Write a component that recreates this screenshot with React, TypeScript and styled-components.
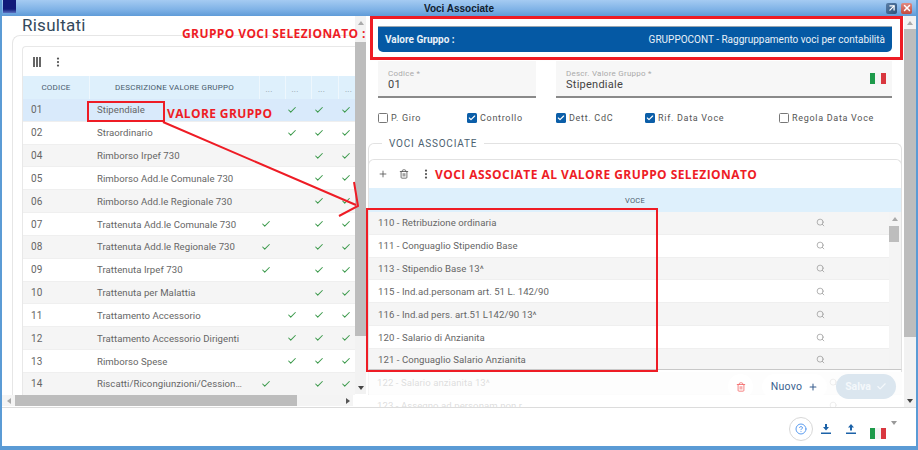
import React from "react";
import styled, { createGlobalStyle } from "styled-components";
import { Check, EllipsisVertical, Plus, Trash2, Search, CircleHelp, X, ArrowUpRight } from "lucide-react";

const Global = createGlobalStyle`
  html, body { margin: 0; padding: 0; background: #fff; }
  #root { width: 918px; height: 450px; }
  * { box-sizing: border-box; }
`;

const Win = styled.div`
  position: relative;
  width: 918px;
  height: 450px;
  overflow: hidden;
  display: flex;
  flex-direction: column;
  background: #fff;
  border-left: 2px solid #5b9bd5;
  border-right: 2px solid #5b9bd5;
  border-bottom: 4px solid #5b9bd5;
  font-family: Roboto, "Liberation Sans", sans-serif;
  color: #666;
`;

const TitleBar = styled.div`
  flex: 0 0 16px;
  margin: 0 -2px;
  padding: 0 3px;
  display: grid;
  grid-template-columns: 1fr auto 1fr;
  align-items: center;
  background: linear-gradient(#a5cbf2, #7fb2e6 60%, #5f9bd8);
`;
const AppIcon = styled.div`
  width: 13px;
  height: 13px;
  margin-top: -3px;
  background: linear-gradient(#101a7a 70%, #5a70c0);
`;
const WinTitle = styled.div`
  font: bold 10px "Liberation Sans", sans-serif;
  color: #10202f;
`;
const WinBtns = styled.div`
  display: flex;
  justify-content: flex-end;
  gap: 4px;
  margin-right: 3px;
`;
const WinBtn = styled.div<{ $bg: string }>`
  width: 11px;
  height: 11px;
  border-radius: 2px;
  display: flex;
  align-items: center;
  justify-content: center;
  background: ${(p) => p.$bg};
  color: #fff;
`;

const Body = styled.div`
  flex: 0 0 391px;
  display: flex;
  overflow: hidden;
`;

const LeftPanel = styled.div`
  flex: 0 0 365px;
  display: flex;
`;
const LeftMain = styled.div`
  flex: 0 0 353px;
  display: flex;
  flex-direction: column;
  overflow: hidden;
`;
const Heading = styled.div`
  flex: 0 0 19px;
  padding-left: 20px;
  font-size: 17px;
  line-height: 19px;
  letter-spacing: 0.25px;
  color: #33495c;
`;
const OuterCard = styled.div`
  flex: 1;
  min-height: 0;
  margin-left: 10px;
  padding: 10px 0 0 9px;
  border: 1px solid #e6e6e6;
  border-right: none;
  border-bottom: none;
  border-radius: 8px 0 0 0;
`;
const InnerCard = styled.div`
  height: 100%;
  overflow: hidden;
  border-top: 1px solid #e8e8e8;
  border-left: 1px solid #e8e8e8;
  border-radius: 4px 0 0 0;
`;
const GridTool = styled.div`
  height: 29px;
  display: flex;
  align-items: center;
  gap: 11px;
  padding-left: 10px;
  color: #555;
`;
const ColsIcon = styled.svg`
  width: 8px;
  height: 10px;
  display: block;
`;
const Cols = "67px 170px 26px 26px 27px 27px";
const HeadRow = styled.div`
  display: grid;
  grid-template-columns: ${Cols};
  width: 343px;
  height: 23px;
  background: #def0fc;
`;
const HeadCell = styled.div`
  display: flex;
  align-items: center;
  justify-content: center;
  font-size: 8px;
  letter-spacing: 0.2px;
  color: #4a5c6c;
  border-right: 1px solid #eef7fd;
  white-space: nowrap;
  overflow: hidden;
`;
const DotsCell = styled(HeadCell)`
  align-items: flex-end;
  padding: 0 7px 5px 0;
  color: #8a98a4;
`;
const Row = styled.div<{ $kind: string }>`
  display: grid;
  grid-template-columns: ${Cols};
  width: 343px;
  height: 22.83px;
  align-items: center;
  font-size: 9.6px;
  letter-spacing: 0.05px;
  color: #666;
  border-bottom: 1px solid #efefef;
  background: ${(p) => (p.$kind === "sel" ? "#d9eafb" : p.$kind === "odd" ? "#f5f5f5" : "#fff")};
`;
const CodeCell = styled.div`
  padding-left: 8px;
  font-size: 10px;
`;
const DescCell = styled.div`
  padding: 0 16px 0 7px;
  white-space: nowrap;
  overflow: hidden;
  text-overflow: ellipsis;
`;
const CheckCell = styled.div`
  display: flex;
  justify-content: center;
  color: #3c9a4c;
  padding-right: 14px;
`;
const HScroll = styled.div`
  flex: 0 0 11px;
  display: flex;
  align-items: center;
  background: #f4f4f4;
  position: relative;
  margin: 0 2px 1px 0;
`;
const HThumb = styled.div`
  margin-left: 13px;
  width: 282px;
  height: 11px;
  background: #bdbdbd;
`;
const ArrowL = styled.div`
  position: absolute;
  left: 5px;
  width: 0;
  height: 0;
  border: 3px solid transparent;
  border-right: 4px solid #aaa;
  border-left: none;
`;
const ArrowR = styled.div`
  position: absolute;
  right: 3px;
  width: 0;
  height: 0;
  border: 3px solid transparent;
  border-left: 4px solid #555;
  border-right: none;
`;
const VScroll = styled.div<{ $w: number; $bottom?: number }>`
  flex: 0 0 ${(p) => p.$w}px;
  margin-bottom: ${(p) => p.$bottom ?? 0}px;
  display: flex;
  flex-direction: column;
  align-items: stretch;
  background: #f2f2f2;
`;
const ArrowUp = styled.div<{ $h: number }>`
  flex: 0 0 ${(p) => p.$h}px;
  padding-top: 5px;
  display: flex;
  justify-content: center;
  align-items: flex-start;
  &::before {
    content: "";
    border: 3px solid transparent;
    border-bottom: 4px solid #aaa;
    border-top: none;
  }
`;
const ArrowDown = styled.div`
  flex: 0 0 12px;
  display: flex;
  justify-content: center;
  align-items: center;
  &::before {
    content: "";
    border: 3px solid transparent;
    border-top: 4px solid #444;
    border-bottom: none;
  }
`;
const VThumb = styled.div<{ $h: number }>`
  flex: 0 0 ${(p) => p.$h}px;
  background: #bdbdbd;
`;
const VGap = styled.div`
  flex: 1;
`;

const RightPanel = styled.div`
  flex: 1;
  display: flex;
  position: relative;
  overflow: hidden;
`;
const RightMain = styled.div`
  flex: 0 0 537px;
  padding: 10px 12px 0 11px;
  background: #fff;
  overflow: hidden;
`;
const ValueBar = styled.div`
  height: 26px;
  padding: 0 7px;
  display: flex;
  justify-content: space-between;
  align-items: center;
  background: #0559a4;
  border-top: 1px solid #9aa6b0;
  border-radius: 0 0 5px 5px;
  color: #e9f1f8;
  font-size: 10px;
`;
const ValueLabel = styled.span`
  font-weight: 700;
`;
const Fields = styled.div`
  display: grid;
  grid-template-columns: 158px 336px;
  gap: 20px;
  margin-top: 9px;
`;
const Field = styled.div`
  position: relative;
  height: 37px;
  padding: 8px 10px 0;
  background: #f7f7f7;
  border-bottom: 2px solid #8a8a8a;
`;
const FieldLabel = styled.div`
  font-size: 8px;
  line-height: 9px;
  color: #aaa;
  letter-spacing: 0.25px;
`;
const FieldValue = styled.div`
  font-size: 11px;
  line-height: 14px;
  letter-spacing: 0.25px;
  color: #444;
`;
const Flag = styled.div<{ $right?: boolean }>`
  display: flex;
  width: 16px;
  height: 11px;
  ${(p) => (p.$right ? "position: absolute; right: 6px; top: 12px;" : "")}
`;
const FlagPart = styled.div<{ $c: string }>`
  flex: 1;
  background: ${(p) => p.$c};
`;
const Checks = styled.div`
  display: grid;
  grid-template-columns: 89px 89px 89px 134px auto;
  margin-top: 13px;
  height: 13px;
`;
const CheckItem = styled.div`
  display: flex;
  align-items: center;
  gap: 3px;
  font-size: 9px;
  letter-spacing: 0.7px;
  color: #555;
`;
const Box = styled.div<{ $on: boolean }>`
  width: 10px;
  height: 10px;
  border-radius: 1.5px;
  display: flex;
  align-items: center;
  justify-content: center;
  color: #fff;
  background: ${(p) => (p.$on ? "#0b5ea8" : "#fff")};
  border: ${(p) => (p.$on ? "none" : "1.5px solid #777")};
`;
const Fieldset = styled.div`
  position: relative;
  margin: 19px 0 0 -10px;
  width: 534px;
  height: 264px;
  padding-top: 15px;
  border: 1px solid #e2e2e2;
  border-bottom: none;
  border-radius: 6px 6px 0 0;
`;
const Legend = styled.div`
  position: absolute;
  top: -6px;
  left: 13px;
  padding: 0 7px;
  background: #fff;
  font-size: 10px;
  line-height: 12px;
  letter-spacing: 0.8px;
  color: #4c5f70;
`;
const SubCard = styled.div`
  margin: 0 -1px;
  border: 1px solid #e2e2e2;
  border-bottom-color: #c8c8c8;
  border-radius: 6px 6px 0 0;
  overflow: hidden;
`;
const SubTool = styled.div`
  height: 28px;
  display: flex;
  align-items: center;
  gap: 11px;
  padding-left: 9px;
  color: #555;
`;
const SubHead = styled.div`
  height: 24px;
  display: flex;
  align-items: center;
  justify-content: center;
  background: #def0fc;
  font-size: 7.5px;
  letter-spacing: 0.3px;
  color: #4a5c6c;
`;
const SubBody = styled.div`
  display: flex;
`;
const SubRows = styled.div`
  flex: 1;
  min-width: 0;
  height: 157px;
  overflow: hidden;
`;
const SubRow = styled.div<{ $odd: boolean }>`
  flex: 0 0 22.83px;
  height: 22.83px;
  padding: 0 64px 0 9px;
  display: flex;
  align-items: center;
  justify-content: space-between;
  font-size: 9.6px;
  letter-spacing: 0.05px;
  color: #666;
  border-bottom: 1px solid #efefef;
  background: ${(p) => (p.$odd ? "#f5f5f5" : "#fff")};
`;
const SubScroll = styled.div`
  flex: 0 0 12px;
  height: 157px;
  display: flex;
  flex-direction: column;
  background: #f4f4f4;
`;
const SubThumb = styled.div`
  flex: 0 0 16px;
  margin-right: 2px;
  background: #bdbdbd;
`;
const TailRows = styled.div`
  margin: 2px -1px 0;
`;
const Fade = styled.div`
  position: absolute;
  left: 2px;
  right: 12px;
  top: 356px;
  height: 35px;
  padding: 0 8px 6px 0;
  background: rgba(255, 255, 255, 0.78);
  display: flex;
  align-items: center;
  justify-content: flex-end;
  gap: 9px;
`;
const RoundBtn = styled.div`
  width: 25px;
  height: 25px;
  border-radius: 50%;
  background: #fff;
  display: flex;
  align-items: center;
  justify-content: center;
  color: #f36a6a;
`;
const NewBtn = styled.div`
  width: 65px;
  height: 25px;
  border-radius: 13px;
  background: #fff;
  display: flex;
  align-items: center;
  justify-content: center;
  gap: 6px;
  font-size: 10.5px;
  letter-spacing: 0.3px;
  color: #3a5f8f;
`;
const SaveBtn = styled.div`
  width: 60px;
  height: 25px;
  border-radius: 13px;
  background: #dbe6ef;
  display: flex;
  align-items: center;
  justify-content: center;
  gap: 5px;
  font-size: 10.5px;
  font-weight: 700;
  color: #f4f8fb;
`;

const Footer = styled.div`
  flex: 1;
  border-top: 1px solid #dcdcdc;
  display: flex;
  align-items: center;
  justify-content: flex-end;
  padding: 3px 19px 0 0;
`;
const HelpBtn = styled.div`
  width: 24px;
  height: 24px;
  border: 1px solid #d8d8d8;
  border-radius: 50%;
  display: flex;
  align-items: center;
  justify-content: center;
  color: #5a9cf0;
`;
const FootBtn = styled.div`
  width: 25px;
  height: 24px;
  display: flex;
  align-items: center;
  justify-content: center;
  color: #1c62a8;
`;
const FootIcon = styled.svg`
  width: 12px;
  height: 12px;
  fill: currentColor;
`;
const FootFlag = styled.div`
  display: flex;
  margin: 10px 0 0 7px;
`;
const Caret = styled.div`
  align-self: flex-start;
  margin: 10px 0 0 5px;
  border: 3px solid transparent;
  border-top: 4px solid #999;
  border-bottom: none;
`;

const Note = styled.div`
  position: absolute;
  font: bold 12px/13px "Open Sans", "Liberation Sans", sans-serif;
  color: #ee1c25;
  white-space: nowrap;
`;
const NoteGroup = styled(Note)`
  left: 180px;
  top: 27px;
  letter-spacing: 0.4px;
`;
const NoteValue = styled(Note)`
  left: 165px;
  top: 107px;
  letter-spacing: 0.38px;
`;
const NoteVoci = styled(Note)`
  left: 433px;
  top: 168px;
  letter-spacing: 0.44px;
`;
const Frame = styled.div`
  position: absolute;
  border: 2px solid #ee1c25;
`;
const FrameGroup = styled(Frame)`
  left: 368px;
  top: 16px;
  width: 533px;
  height: 44px;
  border-width: 3px;
`;
const FrameValue = styled(Frame)`
  left: 85px;
  top: 101px;
  width: 78px;
  height: 21px;
`;
const FrameVoci = styled(Frame)`
  left: 364px;
  top: 208px;
  width: 292px;
  height: 164px;
`;
const ArrowSvg = styled.svg`
  position: absolute;
  left: -2px;
  top: 0;
  width: 918px;
  height: 450px;
  pointer-events: none;
`;

const rows: [string, string, string, number[]][] = [
  ["01", "Stipendiale", "sel", [0, 1, 1, 1]],
  ["02", "Straordinario", "even", [0, 1, 1, 1]],
  ["04", "Rimborso Irpef 730", "odd", [0, 0, 1, 1]],
  ["05", "Rimborso Add.le Comunale 730", "even", [0, 0, 1, 1]],
  ["06", "Rimborso Add.le Regionale 730", "odd", [0, 0, 1, 1]],
  ["07", "Trattenuta Add.le Comunale 730", "even", [1, 0, 1, 1]],
  ["08", "Trattenuta Add.le Regionale 730", "odd", [1, 0, 1, 1]],
  ["09", "Trattenuta Irpef 730", "even", [1, 0, 1, 1]],
  ["10", "Trattenuta per Malattia", "odd", [0, 0, 1, 1]],
  ["11", "Trattamento Accessorio", "even", [0, 1, 1, 1]],
  ["12", "Trattamento Accessorio Dirigenti", "odd", [0, 1, 1, 1]],
  ["13", "Rimborso Spese", "even", [0, 1, 1, 1]],
  ["14", "Riscatti/Ricongiunzioni/Cessioni del quinto", "odd", [1, 0, 1, 1]],
];

const voci = [
  "110 - Retribuzione ordinaria",
  "111 - Conguaglio Stipendio Base",
  "113 - Stipendio Base 13^",
  "115 - Ind.ad.personam art. 51 L. 142/90",
  "116 - Ind.ad pers. art.51 L142/90 13^",
  "120 - Salario di Anzianita",
  "121 - Conguaglio Salario Anzianita",
];
const tail = ["122 - Salario anzianita 13^", "123 - Assegno ad personam non r"];

const checks: [string, boolean][] = [
  ["P. Giro", false],
  ["Controllo", true],
  ["Dett. CdC", true],
  ["Rif. Data Voce", true],
  ["Regola Data Voce", false],
];

const Italy = ({ right }: { right?: boolean }) => (
  <Flag $right={right}>
    <FlagPart $c="#1d9a4a" />
    <FlagPart $c="#f4f4f4" />
    <FlagPart $c="#d9373f" />
  </Flag>
);

export default function App() {
  return (
    <Win>
      <Global />
      <TitleBar>
        <AppIcon />
        <WinTitle>Voci Associate</WinTitle>
        <WinBtns>
          <WinBtn $bg="linear-gradient(135deg,#5a7fa8,#2d4f78)">
            <ArrowUpRight size={10} strokeWidth={3} />
          </WinBtn>
          <WinBtn $bg="linear-gradient(#e08a80,#c5493d)">
            <X size={10} strokeWidth={3.5} />
          </WinBtn>
        </WinBtns>
      </TitleBar>
      <Body>
        <LeftPanel>
          <LeftMain>
            <Heading>Risultati</Heading>
            <OuterCard>
              <InnerCard>
                <GridTool>
                  <ColsIcon viewBox="0 0 8 10">
                    <path d="M0 0h2v10H0zM3 0h2v10H3zM6 0h2v10H6z" fill="#666" />
                  </ColsIcon>
                  <EllipsisVertical size={12} strokeWidth={2.5} />
                </GridTool>
                <HeadRow>
                  <HeadCell>CODICE</HeadCell>
                  <HeadCell>DESCRIZIONE VALORE GRUPPO</HeadCell>
                  <DotsCell>...</DotsCell>
                  <DotsCell>...</DotsCell>
                  <DotsCell>...</DotsCell>
                  <DotsCell>...</DotsCell>
                </HeadRow>
                {rows.map(([code, desc, kind, marks]) => (
                  <Row key={code} $kind={kind}>
                    <CodeCell>{code}</CodeCell>
                    <DescCell>{desc}</DescCell>
                    {marks.map((m, i) => (
                      <CheckCell key={i}>{m ? <Check size={10} strokeWidth={2.5} /> : null}</CheckCell>
                    ))}
                  </Row>
                ))}
              </InnerCard>
            </OuterCard>
            <HScroll>
              <ArrowL />
              <HThumb />
              <ArrowR />
            </HScroll>
          </LeftMain>
          <VScroll $w={11} $bottom={13}>
            <ArrowUp $h={26} />
            <VThumb $h={294} />
            <VGap />
            <ArrowDown />
          </VScroll>
        </LeftPanel>
        <RightPanel>
          <RightMain>
            <ValueBar>
              <ValueLabel>Valore Gruppo :</ValueLabel>
              <span>GRUPPOCONT - Raggruppamento voci per contabilità</span>
            </ValueBar>
            <Fields>
              <Field>
                <FieldLabel>Codice *</FieldLabel>
                <FieldValue>01</FieldValue>
              </Field>
              <Field>
                <FieldLabel>Descr. Valore Gruppo *</FieldLabel>
                <FieldValue>Stipendiale</FieldValue>
                <Italy right />
              </Field>
            </Fields>
            <Checks>
              {checks.map(([label, on]) => (
                <CheckItem key={label}>
                  <Box $on={on}>{on ? <Check size={8} strokeWidth={3.5} /> : null}</Box>
                  {label}
                </CheckItem>
              ))}
            </Checks>
            <Fieldset>
              <Legend>VOCI ASSOCIATE</Legend>
              <SubCard>
                <SubTool>
                  <Plus size={10} strokeWidth={2} />
                  <Trash2 size={10} strokeWidth={2} />
                  <EllipsisVertical size={12} strokeWidth={2.5} />
                </SubTool>
                <SubHead>VOCE</SubHead>
                <SubBody>
                  <SubRows>
                    {voci.map((v, i) => (
                      <SubRow key={v} $odd={i % 2 === 0}>
                        {v}
                        <Search size={9} color="#999" />
                      </SubRow>
                    ))}
                  </SubRows>
                  <SubScroll>
                    <ArrowUp $h={14} />
                    <SubThumb />
                    <VGap />
                  </SubScroll>
                </SubBody>
              </SubCard>
              <TailRows>
                {tail.map((v, i) => (
                  <SubRow key={v} $odd={i % 2 === 0}>
                    {v}
                    <Search size={9} color="#999" />
                  </SubRow>
                ))}
              </TailRows>
            </Fieldset>
          </RightMain>
          <VScroll $w={12}>
            <ArrowUp $h={13} />
            <VThumb $h={308} />
            <VGap />
            <ArrowDown />
          </VScroll>
          <Fade>
            <RoundBtn>
              <Trash2 size={10} strokeWidth={2} />
            </RoundBtn>
            <NewBtn>
              Nuovo
              <Plus size={10} strokeWidth={2.5} />
            </NewBtn>
            <SaveBtn>
              Salva
              <Check size={11} strokeWidth={2.5} />
            </SaveBtn>
          </Fade>
        </RightPanel>
      </Body>
      <Footer>
        <HelpBtn>
          <CircleHelp size={12} />
        </HelpBtn>
        <FootBtn>
          <FootIcon viewBox="0 0 12 12">
            <path d="M5 1h2v3h2L6 7.500 3 4h2zM1 9.500h10V11H1z" />
          </FootIcon>
        </FootBtn>
        <FootBtn>
          <FootIcon viewBox="0 0 12 12">
            <path d="M6 1l3 3.500H7v3H5v-3H3zM1 9.500h10V11H1z" />
          </FootIcon>
        </FootBtn>
        <FootFlag>
          <Italy />
        </FootFlag>
        <Caret />
      </Footer>

      <FrameGroup />
      <FrameValue />
      <FrameVoci />
      <NoteGroup>GRUPPO VOCI SELEZIONATO :</NoteGroup>
      <NoteValue>VALORE GRUPPO</NoteValue>
      <NoteVoci>VOCI ASSOCIATE AL VALORE GRUPPO SELEZIONATO</NoteVoci>
      <ArrowSvg viewBox="0 0 918 450">
        <path d="M163 122L356 205M354 182L358 206L339 216" fill="none" stroke="#ee1c25" strokeWidth="2" />
      </ArrowSvg>
    </Win>
  );
}
